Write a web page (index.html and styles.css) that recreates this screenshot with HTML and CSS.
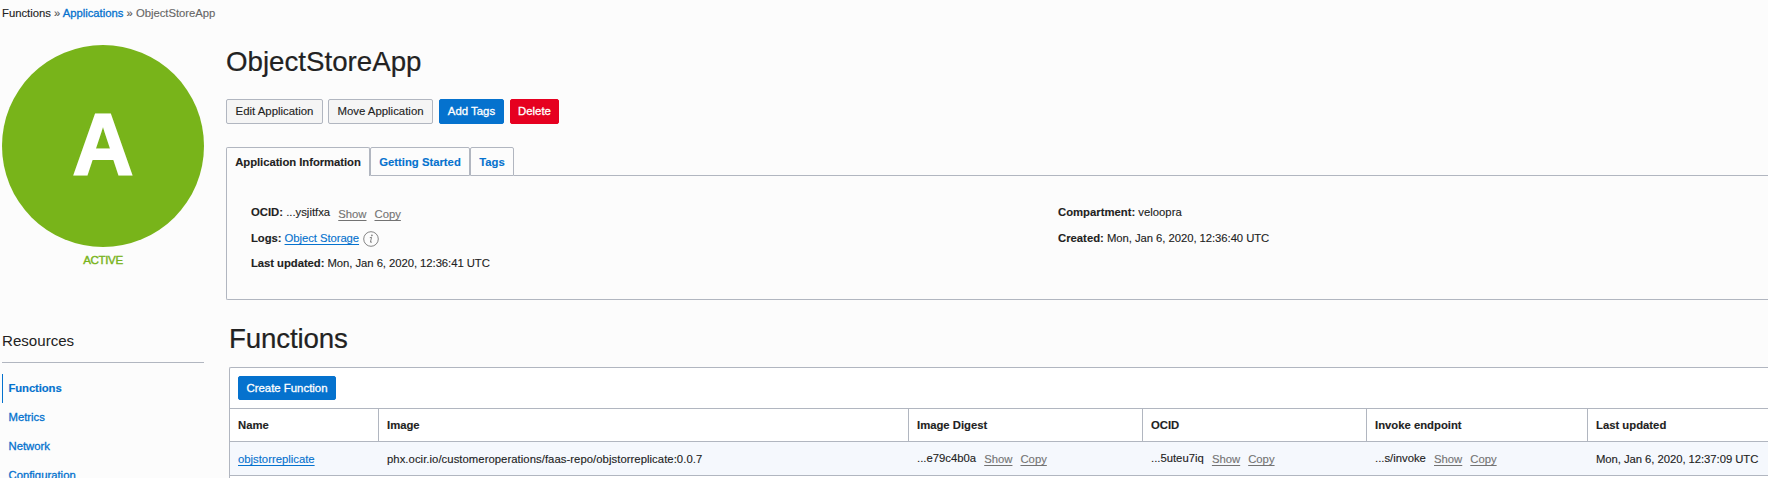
FILE: index.html
```html
<!DOCTYPE html>
<html lang="en">
<head>
<meta charset="utf-8">
<title>ObjectStoreApp</title>
<link rel="stylesheet" href="styles.css">
</head>
<body>
<nav class="breadcrumb"><span>Functions</span> <span class="sep">»</span> <a href="#">Applications</a> <span class="sep">»</span> <span class="current">ObjectStoreApp</span></nav>
<div class="layout">
  <aside class="sidebar">
    <div class="avatar"><span class="avatar-letter">A</span></div>
    <div class="status">ACTIVE</div>
    <h2 class="resources-title">Resources</h2>
    <ul class="resources">
      <li class="active"><a href="#">Functions</a></li>
      <li><a href="#">Metrics</a></li>
      <li><a href="#">Network</a></li>
      <li><a href="#">Configuration</a></li>
    </ul>
  </aside>
  <main class="main">
    <h1 class="title">ObjectStoreApp</h1>
    <div class="actions">
      <button class="btn btn-edit">Edit Application</button>
      <button class="btn btn-move">Move Application</button>
      <button class="btn primary btn-tags">Add Tags</button>
      <button class="btn danger">Delete</button>
    </div>
    <div class="tabs">
      <a class="tab tab-info selected">Application Information</a>
      <a class="tab tab-start">Getting Started</a>
      <a class="tab tab-tags">Tags</a>
      <span class="tabs-rest"></span>
    </div>
    <section class="panel">
      <div class="details">
        <p><b>OCID:</b> ...ysjitfxa <a class="mini low">Show</a><a class="mini low">Copy</a></p>
        <p class="logs"><b>Logs:</b> <a class="link" href="#">Object Storage</a><svg class="info" width="16" height="16" viewBox="0 0 16 16"><circle cx="8" cy="8" r="7.3"/><path d="M6.8 6.7 8.6 6.3 7.4 11.1Q7.3 11.8 9 10.9"/><circle class="dot" cx="8.9" cy="4.4" r=".8"/></svg></p>
        <p class="updated"><b>Last updated:</b> <span class="date">Mon, Jan 6, 2020, 12:36:41 UTC</span></p>
      </div>
      <div class="details">
        <p><b>Compartment:</b> veloopra</p>
        <p><b>Created:</b> <span class="date">Mon, Jan 6, 2020, 12:36:40 UTC</span></p>
      </div>
    </section>
    <h1 class="subtitle">Functions</h1>
    <section class="list">
      <div class="toolbar"><button class="btn primary btn-create">Create Function</button></div>
      <div class="row head">
        <div>Name</div><div>Image</div><div>Image Digest</div><div>OCID</div><div>Invoke endpoint</div><div>Last updated</div>
      </div>
      <div class="row item">
        <div><a class="link" href="#">objstorreplicate</a></div>
        <div class="image">phx.ocir.io/customeroperations/faas-repo/objstorreplicate:0.0.7</div>
        <div><span class="up">...e79c4b0a</span> <a class="mini">Show</a><a class="mini">Copy</a></div>
        <div><span class="up">...5uteu7iq</span> <a class="mini">Show</a><a class="mini">Copy</a></div>
        <div><span class="up">...s/invoke</span> <a class="mini">Show</a><a class="mini">Copy</a></div>
        <div class="date">Mon, Jan 6, 2020, 12:37:09 UTC</div>
      </div>
    </section>
  </main>
</div>
</body>
</html>
```
FILE: styles.css
```css
* { box-sizing: border-box; }
body {
  margin: 0;
  width: 1768px;
  height: 478px;
  overflow: hidden;
  background: #fcfcfc;
  color: #222;
  font: 11.3px/20px "Liberation Sans", Arial, sans-serif;
  -webkit-text-stroke: .12px;
}
h1, h2, p, ul { margin: 0; padding: 0; font-weight: normal; }
a { color: #0572ce; text-decoration: none; }
.breadcrumb { padding: 3px 0 0 2px; height: 23px; white-space: nowrap; letter-spacing: -.02px; }
.breadcrumb a { -webkit-text-stroke: .3px #0572ce; }
.sep { color: #555; }
.current { color: #666; }
.layout { display: grid; grid-template-columns: 226px 1fr; height: 455px; }
.sidebar { padding: 22px 22px 0 2px; }
.avatar {
  width: 202px;
  height: 202px;
  border-radius: 50%;
  background: #78b41a;
  color: #fff;
  text-align: center;
}
.avatar-letter {
  display: block;
  font-size: 87px;
  font-weight: bold;
  line-height: 198px;
  transform: scaleX(.97);
  -webkit-text-stroke: 2px #fff;
}
.status {
  margin-top: 3px;
  text-align: center;
  color: #78b41a;
  font-size: 11.6px;
  letter-spacing: -.4px;
  -webkit-text-stroke: .4px #78b41a;
}
.resources-title {
  margin-top: 60px;
  height: 33px;
  border-bottom: 1px solid #b1b6c0;
  font-size: 15.1px;
  line-height: 21px;
  -webkit-text-stroke: 0;
}
.resources { list-style: none; padding-top: 11px; }
.resources li { height: 29px; padding-left: 6.5px; line-height: 29px; }
.resources a { -webkit-text-stroke: .3px #0572ce; }
.resources .active { padding-left: 5.5px; border-left: 1px solid #0572ce; font-weight: bold; letter-spacing: -.1px; }
.resources .active a { -webkit-text-stroke: .15px #0572ce; }
.title { padding-top: 23px; height: 76px; font-size: 27.7px; line-height: 32px; -webkit-text-stroke: .2px; }
.actions { display: flex; height: 48px; }
.btn {
  display: block;
  height: 25px;
  padding: 0;
  border: 1px solid #b1b6c0;
  border-radius: 2px;
  background: #f5f5f5;
  color: #222;
  font: 11.4px/23px "Liberation Sans", Arial, sans-serif;
}
.btn-edit { width: 97px; margin-right: 5px; }
.btn-move { width: 105px; margin-right: 6px; }
.btn-tags { width: 65px; margin-right: 6px; }
.btn-create { width: 98px; height: 24px; line-height: 22px; }
.primary { background: #0572ce; border-color: #0572ce; color: #fff; -webkit-text-stroke: .3px #fff; }
.danger { width: 49px; background: #e60020; border-color: #e60020; color: #fff; -webkit-text-stroke: .3px #fff; }
.tabs { display: flex; height: 29px; }
.tab {
  border: 1px solid #b1b6c0;
  border-radius: 2px 2px 0 0;
  line-height: 28px;
  font-weight: bold;
  text-align: center;
}
.tab-info { width: 144px; letter-spacing: -.05px; }
.tab-start { width: 100px; }
.tab-tags { width: 44px; }
.selected { color: #222; border-bottom: 0; }
.tabs-rest { flex: 1; border-bottom: 1px solid #b1b6c0; }
.panel {
  display: grid;
  grid-template-columns: 807px 1fr;
  height: 124px;
  padding: 26px 0 0 24px;
  border: 1px solid #b1b6c0;
  border-width: 0 0 1px 1px;
  border-radius: 0 0 0 2px;
}
.details p { height: 26px; white-space: nowrap; }
.mini { display: inline-block; margin-left: 5px; color: #737373; text-decoration: underline; text-underline-offset: 1.5px; }
.mini + .mini { margin-left: 8px; }
.low { position: relative; top: 2px; }
.link { text-decoration: underline; text-underline-offset: 1.5px; }
.details .logs { letter-spacing: -.06px; }
.info { margin-left: 4px; vertical-align: -5px; fill: none; stroke: #777; stroke-width: .9; }
.dot { fill: #777; stroke: none; }
.details .updated { margin-top: -1px; letter-spacing: -.05px; }
.date { letter-spacing: -.055px; }
.image { letter-spacing: .05px; }
.subtitle { margin-left: 3px; padding-top: 23px; height: 67px; font-size: 27.7px; line-height: 32px; letter-spacing: -.15px; -webkit-text-stroke: .2px; }
.list {
  margin-left: 3px;
  height: 111px;
  border: 1px solid #b1b6c0;
  border-width: 1px 0 0 1px;
  border-radius: 2px 0 0 0;
  background: #fff;
}
.toolbar { height: 41px; padding: 8px; border-bottom: 1px solid #b1b6c0; }
.row {
  display: grid;
  grid-template-columns: 149px 530px 234px 224px 221px 1fr;
  height: 33px;
  border-bottom: 1px solid #b1b6c0;
  line-height: 32px;
  white-space: nowrap;
}
.row > div { padding-left: 8px; }
.head { font-weight: bold; }
.head > div { border-right: 1px solid #b1b6c0; }
.head > div:last-child { border-right: 0; }
.item { height: 34px; line-height: 35px; background: #f5f8fd; }
.up { position: relative; top: -1px; }
```
